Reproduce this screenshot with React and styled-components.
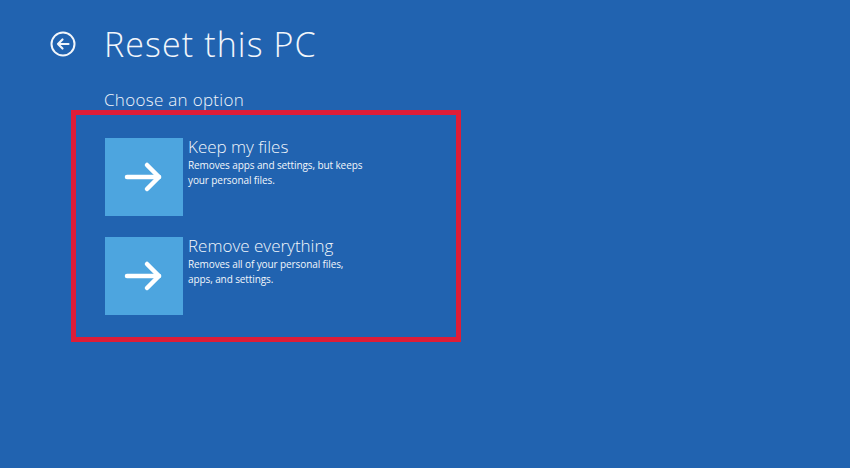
import React from 'react';
import styled, { createGlobalStyle } from 'styled-components';

const GlobalStyle = createGlobalStyle`
  html, body {
    margin: 0;
    padding: 0;
    background-color: #2163b0;
  }
  body {
    font-family: "Open Sans", "Liberation Sans", sans-serif;
    color: #f2f6fb;
  }
`;

const Screen = styled.div`
  width: 850px;
  height: 468px;
  background-color: #2163b0;
  padding: 28px 0 0 0;
  box-sizing: border-box;
  overflow: hidden;
`;

const Header = styled.header`
  display: flex;
  align-items: center;
  gap: 28px;
  padding-left: 50px;
  height: 32px;
`;

const BackButton = styled.button`
  display: flex;
  padding: 0;
  border: none;
  background: none;
  color: #f2f6fb;
  cursor: pointer;
`;

const Title = styled.h1`
  margin: 0;
  font-size: 34px;
  font-weight: 300;
  line-height: 32px;
  letter-spacing: 1.1px;
`;

const Subtitle = styled.h2`
  margin: 30px 0 0 104px;
  font-size: 17px;
  font-weight: 300;
  line-height: 20px;
  letter-spacing: 0.3px;
`;

const OptionsBox = styled.section`
  display: flex;
  flex-direction: column;
  gap: 21px;
  width: 390px;
  margin: 0 0 0 71px;
  padding: 23px 0 22px 29px;
  box-sizing: border-box;
  border: 5px solid #de1d37;
`;

const Option = styled.div`
  display: flex;
  gap: 5px;
  cursor: pointer;
`;

const Tile = styled.div`
  display: flex;
  align-items: center;
  justify-content: center;
  width: 78px;
  height: 78px;
  flex-shrink: 0;
  background-color: #4da5df;
`;

const OptionText = styled.div`
  display: flex;
  flex-direction: column;
`;

const OptionTitle = styled.div`
  margin-top: -2px;
  font-size: 17px;
  font-weight: 300;
  line-height: 22px;
`;

const OptionDescription = styled.div`
  font-size: 10px;
  line-height: 15px;
  letter-spacing: -0.1px;
  width: 180px;
`;

const BackIcon = () => (
  <svg width="26" height="26" viewBox="0 0 26 26" fill="none" stroke="currentColor">
    <circle cx="13" cy="13" r="11.5" strokeWidth="2" />
    <path d="M18.5 13H8M12.5 8.5L8 13l4.5 4.5" strokeWidth="2.2" strokeLinecap="round" strokeLinejoin="round" />
  </svg>
);

const ArrowIcon = () => (
  <svg width="40" height="32" viewBox="0 0 40 32" fill="none" stroke="#ffffff">
    <path d="M3 16H35" strokeWidth="4.5" strokeLinecap="round" />
    <path d="M23 4L35 16L23 28" strokeWidth="4.5" strokeLinecap="round" strokeLinejoin="round" />
  </svg>
);

const options = [
  {
    title: 'Keep my files',
    description: 'Removes apps and settings, but keeps your personal files.',
  },
  {
    title: 'Remove everything',
    description: 'Removes all of your personal files, apps, and settings.',
  },
];

const App = () => (
  <>
    <GlobalStyle />
    <Screen>
      <Header>
        <BackButton aria-label="Back">
          <BackIcon />
        </BackButton>
        <Title>Reset this PC</Title>
      </Header>
      <Subtitle>Choose an option</Subtitle>
      <OptionsBox>
        {options.map((option) => (
          <Option key={option.title}>
            <Tile>
              <ArrowIcon />
            </Tile>
            <OptionText>
              <OptionTitle>{option.title}</OptionTitle>
              <OptionDescription>{option.description}</OptionDescription>
            </OptionText>
          </Option>
        ))}
      </OptionsBox>
    </Screen>
  </>
);

export default App;
